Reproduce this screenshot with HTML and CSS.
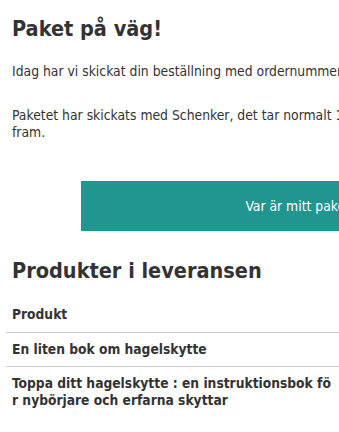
FILE: index.html
```
<!DOCTYPE html>
<html lang="sv">
<head>
<meta charset="utf-8">
<link rel="stylesheet" href="styles.css">
</head>
<body>
<div class="mail">
  <h1 class="title">Paket på väg!</h1>
  <p class="text">Idag har vi skickat din beställning med ordernummer 123456.</p>
  <p class="text">Paketet har skickats med Schenker, det tar normalt 1-3 arbetsdagar innan det kommer fram.</p>
  <div class="btn-row"><a class="btn">Var är mitt paket?</a></div>
  <h2 class="subtitle">Produkter i leveransen</h2>
  <table class="products">
    <tr><th class="name">Produkt</th><th class="qty">Antal</th></tr>
    <tr><td class="name">En liten bok om hagelskytte</td><td class="qty">1</td></tr>
    <tr><td class="name">Toppa ditt hagelskytte : en instruktionsbok för nybörjare och erfarna skyttar</td><td class="qty">1</td></tr>
  </table>
</div>
</body>
</html>
```
FILE: styles.css
```
html, body { margin: 0; padding: 0; overflow: hidden; background: #fff; }
body { font-family: "DejaVu Sans Condensed", "DejaVu Sans", sans-serif; color: #333; }
.mail { width: 545px; padding: 0 12px; }
.title { font-size: 21.5px; font-weight: bold; margin: 16px 0 0; line-height: 26px; }
.text { font-size: 13.8px; line-height: 17px; margin: 21px 0 0; }
.text + .text { margin-top: 27px; }
.btn-row { margin: 40px 0 0 69px; }
.btn { display: flex; align-items: center; justify-content: center; width: 440px; height: 50px; background: #21958f; color: #fff; font-size: 13.8px; text-decoration: none; }
.subtitle { font-size: 21.5px; font-weight: bold; margin: 28px 0 0; line-height: 24px; }
.products { border-collapse: collapse; margin: 14px 0 0 -6px; width: 430px; font-size: 13.7px; }
.products th, .products td { text-align: left; font-weight: bold; padding: 9px 6px; line-height: 17px; vertical-align: top; }
.products td { padding-top: 8px; padding-bottom: 8px; }
.products tr + tr td { border-top: 1px solid #ccc; }
.products .name { width: 322px; word-break: break-all; }
```
